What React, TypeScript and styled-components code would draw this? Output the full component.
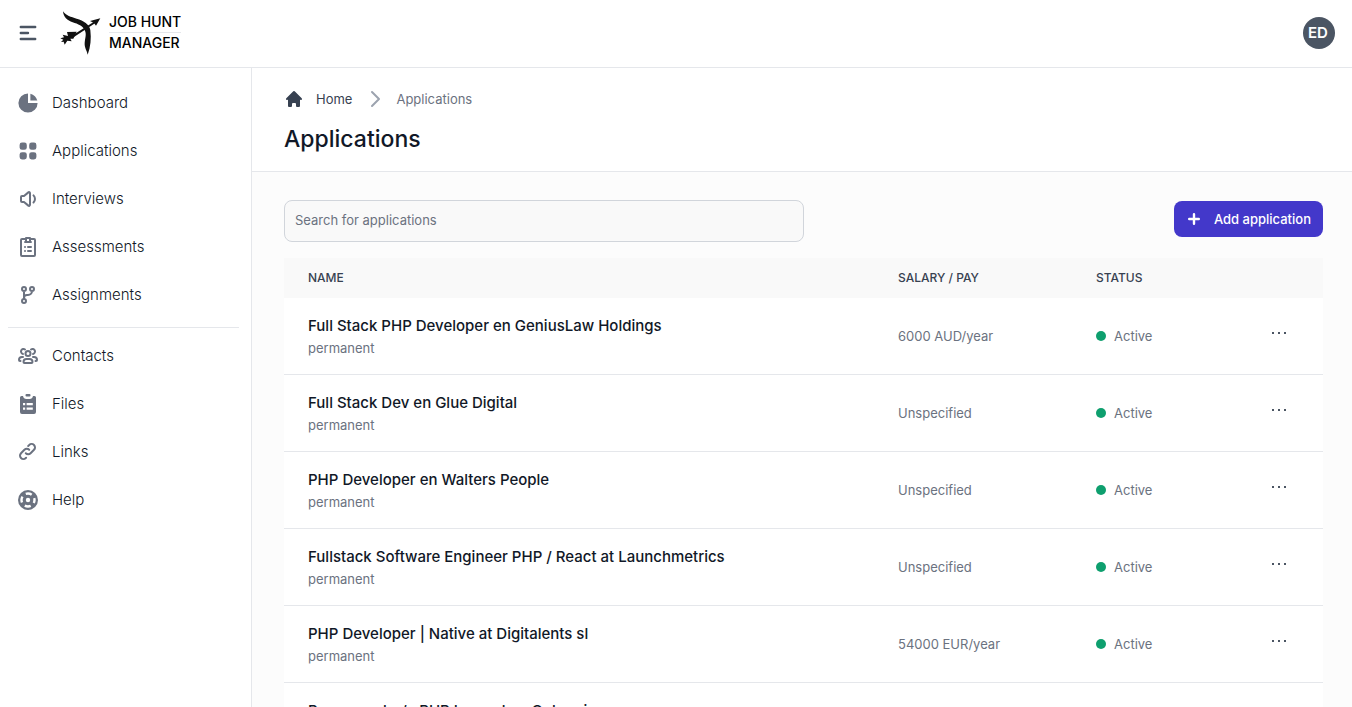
import React from 'react';
import styled, { createGlobalStyle } from 'styled-components';

const GlobalStyle = createGlobalStyle`
  *, *::before, *::after { box-sizing: border-box; }
  body { margin: 0; background: #fff; color: #111827; font: 400 15px/24px Inter, sans-serif; }
  button, input { font: inherit; }
  h1, p { margin: 0; }
  a { color: inherit; text-decoration: none; }
`;

const Shell = styled.div`
  display: flex;
  flex-direction: column;
  height: 100vh;
  overflow: hidden;
`;

const TopBar = styled.header`
  display: flex;
  flex: none;
  align-items: center;
  justify-content: space-between;
  padding: 8px 17px 9px 16px;
  border-bottom: 1px solid #e5e7eb;
`;

const Brand = styled.div`
  display: flex;
  align-items: center;
`;

const IconButton = styled.button`
  display: flex;
  padding: 0;
  border: 0;
  background: none;
  color: #4b5563;
  cursor: pointer;
`;

const LogoLink = styled.a`
  display: flex;
  align-items: center;
  gap: 3px;
  margin-left: 16px;
`;

const LogoText = styled.span`
  display: flex;
  flex-direction: column;
  padding-bottom: 2px;
  color: #000;
  font-size: 14px;
  font-weight: 500;
  line-height: 20px;
`;

const LogoLine = styled.span<{ $ruled?: boolean }>`
  border-bottom: ${(p) => (p.$ruled ? '1px solid #e5e7eb' : '0')};
`;

const Avatar = styled.button`
  width: 32px;
  height: 32px;
  padding: 0 2px 0 0;
  border: 0;
  border-radius: 50%;
  background: #4b5563;
  color: #fff;
  font-size: 15px;
  font-weight: 600;
  cursor: pointer;
`;

const Body = styled.div`
  display: flex;
  flex: 1;
  min-height: 0;
`;

const Sidebar = styled.nav`
  flex: none;
  width: 252px;
  padding: 15px 12px 16px 8px;
  border-right: 1px solid #e5e7eb;
`;

const NavList = styled.ul<{ $divided?: boolean }>`
  display: flex;
  flex-direction: column;
  gap: 8px;
  margin: ${(p) => (p.$divided ? '12px 0 0' : '0')};
  padding: ${(p) => (p.$divided ? '8px 0 0' : '0')};
  border-top: ${(p) => (p.$divided ? '1px solid #e5e7eb' : '0')};
  list-style: none;
`;

const NavLink = styled.a`
  display: flex;
  align-items: center;
  gap: 12px;
  padding: 8px;
  border-radius: 8px;
  font-weight: 300;

  svg { color: #6b7280; }
`;

const Main = styled.main`
  flex: 1;
  min-width: 0;
  overflow-y: auto;
  scrollbar-width: none;
  background: #fcfcfc;
`;

const PageHead = styled.div`
  padding: 19px 32px 16px;
  border-bottom: 1px solid #e5e7eb;
  background: #fff;
`;

const Crumbs = styled.nav`
  display: flex;
  align-items: center;
  gap: 10px;
  margin-bottom: 12px;
  color: #6b7280;
  font-size: 13px;
  line-height: 20px;
`;

const CrumbLink = styled.a`
  display: flex;
  align-items: center;
  gap: 12px;
  color: #374151;
`;

const Title = styled.h1`
  font-size: 23px;
  font-weight: 500;
  line-height: 32px;
`;

const Content = styled.div`
  padding: 28px 29px 0 32px;
`;

const Toolbar = styled.div`
  display: flex;
  align-items: center;
  justify-content: space-between;
  margin-bottom: 16px;
`;

const Search = styled.input`
  width: 50%;
  height: 42px;
  padding: 0 10px 2px;
  border: 1px solid #d1d5db;
  border-radius: 8px;
  background: #f9f9f9;
  color: #111827;
  font-size: 13px;

  &::placeholder { color: #6b7280; opacity: 1; }
`;

const AddButton = styled.button`
  display: flex;
  align-items: center;
  gap: 8px;
  height: 36px;
  margin-bottom: 4px;
  padding: 0 12px 0 8px;
  border: 0;
  border-radius: 8px;
  background: #4338ca;
  color: #fff;
  font-size: 13px;
  font-weight: 500;
  cursor: pointer;
`;

const Table = styled.table`
  width: 100%;
  border-collapse: separate;
  border-spacing: 0;
  table-layout: fixed;
`;

const HeadCell = styled.th<{ $width?: number }>`
  width: ${(p) => (p.$width ? `${p.$width}px` : 'auto')};
  height: 40px;
  padding: 0 24px;
  background: #f9f9f9;
  color: #374151;
  font-size: 12px;
  font-weight: 500;
  line-height: 16px;
  text-align: left;
  text-transform: uppercase;
`;

const Cell = styled.td`
  padding: 16px 24px;
  border-bottom: 1px solid #e5e7eb;
  background: #fff;
  color: #6b7280;
  font-size: 13px;
  line-height: 20px;
`;

const JobTitle = styled.p`
  color: #111827;
  font-size: 15px;
  font-weight: 500;
  line-height: 24px;
`;

const Status = styled.span`
  display: flex;
  align-items: center;
  gap: 8px;

  &::before {
    width: 10px;
    height: 10px;
    border-radius: 50%;
    background: #0e9f6e;
    content: '';
  }
`;

const Svg = ({ size = 24, box = 24, children }: { size?: number; box?: number; children: React.ReactNode }) => (
  <svg width={size} height={size} viewBox={`0 0 ${box} ${box}`} fill="currentColor" aria-hidden="true">
    {children}
  </svg>
);

const Line = ({ d, color = 'currentColor' }: { d: string; color?: string }) => (
  <Svg>
    <path d={d} fill="none" stroke={color} strokeWidth="2" strokeLinecap="round" strokeLinejoin="round" />
  </Svg>
);

const icons = {
  pie: (
    <Svg box={20}>
      <path d="M2 10a8 8 0 0 1 8-8v8h8a8 8 0 1 1-16 0z" />
      <path d="M12 2.252A8.014 8.014 0 0 1 17.748 8H12V2.252z" />
    </Svg>
  ),
  grid: (
    <Svg box={20}>
      <path d="M5 3a2 2 0 0 0-2 2v2a2 2 0 0 0 2 2h2a2 2 0 0 0 2-2V5a2 2 0 0 0-2-2H5zM5 11a2 2 0 0 0-2 2v2a2 2 0 0 0 2 2h2a2 2 0 0 0 2-2v-2a2 2 0 0 0-2-2H5zM11 5a2 2 0 0 1 2-2h2a2 2 0 0 1 2 2v2a2 2 0 0 1-2 2h-2a2 2 0 0 1-2-2V5zM11 13a2 2 0 0 1 2-2h2a2 2 0 0 1 2 2v2a2 2 0 0 1-2 2h-2a2 2 0 0 1-2-2v-2z" />
    </Svg>
  ),
  volume: (
    <Line d="M17.500 8.400a5 5 0 0 1 0 7.100M14 6.135v11.730a1 1 0 0 1-1.640.768L8 15H6a1 1 0 0 1-1-1v-4a1 1 0 0 1 1-1h2l4.360-3.633a1 1 0 0 1 1.640.768Z" />
  ),
  clipboard: (
    <Line d="M15 4h3a1 1 0 0 1 1 1v15a1 1 0 0 1-1 1H6a1 1 0 0 1-1-1V5a1 1 0 0 1 1-1h3m0 3h6m-3 5h3m-6 0h.01M12 16h3m-6 0h.01M10 3v4h4V3h-4Z" />
  ),
  branch: (
    <Line d="M8 8v8m0-8a2 2 0 1 0 0-4 2 2 0 0 0 0 4Zm0 8a2 2 0 1 0 0 4 2 2 0 0 0 0-4Zm8-8a2 2 0 1 0 0-4 2 2 0 0 0 0 4Zm0 0a4 4 0 0 1-4 4h-1a3 3 0 0 0-3 3" />
  ),
  users: (
    <Line d="M4.5 17H4a1 1 0 0 1-1-1 3 3 0 0 1 3-3h1m0-3.05A2.5 2.5 0 1 1 9 5.5M19.5 17h.5a1 1 0 0 0 1-1 3 3 0 0 0-3-3h-1m0-3.05a2.5 2.5 0 1 0-2-4.45m.5 13.5h-7a1 1 0 0 1-1-1 3 3 0 0 1 3-3h3a3 3 0 0 1 3 3 1 1 0 0 1-1 1Zm-1-9.5a2.5 2.5 0 1 1-5 0 2.5 2.5 0 0 1 5 0Z" />
  ),
  files: (
    <Svg>
      <rect x="9.500" y="2" width="5" height="2.400" rx="1" />
      <path
        fillRule="evenodd"
        d="M5.500 4h1.500c.3 2 1.700 3 3.300 3h3.400c1.600 0 3-1 3.300-3h1.500A1.500 1.500 0 0 1 20 5.500V20a2 2 0 0 1-2 2H6a2 2 0 0 1-2-2V5.500A1.500 1.500 0 0 1 5.500 4ZM7 11v2.300h2.200V11Zm3.600 0v2.300h6.200V11ZM7 15.500v2.300h2.200v-2.300Zm3.600 0v2.300h6.200v-2.300Z"
      />
    </Svg>
  ),
  link: (
    <Line d="M13.213 9.787a3.391 3.391 0 0 0-4.795 0l-3.425 3.426a3.390 3.390 0 0 0 4.795 4.794l.321-.304m-.321-4.490a3.390 3.390 0 0 0 4.795 0l3.424-3.426a3.390 3.390 0 0 0-4.794-4.795l-1.028.961" />
  ),
  help: (
    <Svg>
      <circle cx="12" cy="12" r="10" />
      <circle cx="12" cy="12" r="6.500" fill="none" stroke="#fff" strokeWidth="2.400" strokeDasharray="6.200 4.010" strokeDashoffset="3.100" />
      <circle cx="12" cy="12" r="2.200" fill="#fff" />
    </Svg>
  ),
};

type IconName = keyof typeof icons;

const primaryNav: [string, IconName][] = [
  ['Dashboard', 'pie'],
  ['Applications', 'grid'],
  ['Interviews', 'volume'],
  ['Assessments', 'clipboard'],
  ['Assignments', 'branch'],
];

const secondaryNav: [string, IconName][] = [
  ['Contacts', 'users'],
  ['Files', 'files'],
  ['Links', 'link'],
  ['Help', 'help'],
];

const jobs = [
  { title: 'Full Stack PHP Developer en GeniusLaw Holdings', pay: '6000 AUD/year' },
  { title: 'Full Stack Dev en Glue Digital', pay: 'Unspecified' },
  { title: 'PHP Developer en Walters People', pay: 'Unspecified' },
  { title: 'Fullstack Software Engineer PHP / React at Launchmetrics', pay: 'Unspecified' },
  { title: 'PHP Developer | Native at Digitalents sl', pay: '54000 EUR/year' },
  { title: 'Programador/a PHP Laravel en Octopai', pay: 'Unspecified' },
];

const NavItems = ({ items, divided }: { items: [string, IconName][]; divided?: boolean }) => (
  <NavList $divided={divided}>
    {items.map(([label, icon]) => (
      <li key={label}>
        <NavLink href="#">
          {icons[icon]}
          {label}
        </NavLink>
      </li>
    ))}
  </NavList>
);

const BowLogo = () => (
  <svg width="50" height="50" viewBox="0 0 150 150" fill="#111" aria-hidden="true">
    <path d="M21 10C30 23 45 27 62 32C83 38 100 48 103 66C106 92 104 116 95 140C93 128 85 120 86 105C87 90 92 80 87 68C81 54 66 48 50 43C34 37 22 27 21 10Z" />
    <path d="M45 85L114 41L117 46L48 91Z" />
    <path d="M133 31L120 53L114 45L102 39Z" />
    <path d="M13 91L24 88L20 80L36 84L33 72L62 71L52 92L43 92L47 100L34 98L26 110L23 101L15 102L22 95Z" />
  </svg>
);

export default function App() {
  return (
    <Shell>
      <GlobalStyle />
      <TopBar>
        <Brand>
          <IconButton aria-label="Toggle sidebar">
            <Svg box={20}>
              <path d="M3 5a1 1 0 0 1 1-1h12a1 1 0 1 1 0 2H4a1 1 0 0 1-1-1zM3 10a1 1 0 0 1 1-1h6a1 1 0 1 1 0 2H4a1 1 0 0 1-1-1zM3 15a1 1 0 0 1 1-1h12a1 1 0 1 1 0 2H4a1 1 0 0 1-1-1z" />
            </Svg>
          </IconButton>
          <LogoLink href="#">
            <BowLogo />
            <LogoText>
              <LogoLine $ruled>JOB HUNT</LogoLine>
              <LogoLine>MANAGER</LogoLine>
            </LogoText>
          </LogoLink>
        </Brand>
        <Avatar aria-label="Account menu">ED</Avatar>
      </TopBar>
      <Body>
        <Sidebar aria-label="Main">
          <NavItems items={primaryNav} />
          <NavItems items={secondaryNav} divided />
        </Sidebar>
        <Main>
          <PageHead>
            <Crumbs aria-label="Breadcrumb">
              <CrumbLink href="#">
                <Svg size={20} box={20}>
                  <path d="M10.707 2.293a1 1 0 0 0-1.414 0l-7 7a1 1 0 0 0 1.414 1.414L4 10.414V17a1 1 0 0 0 1 1h2a1 1 0 0 0 1-1v-2a1 1 0 0 1 1-1h2a1 1 0 0 1 1 1v2a1 1 0 0 0 1 1h2a1 1 0 0 0 1-1v-6.586l.293.293a1 1 0 0 0 1.414-1.414l-7-7z" />
                </Svg>
                Home
              </CrumbLink>
              <Line d="M10 5l7 7-7 7" color="#9ca3af" />
              <span aria-current="page">Applications</span>
            </Crumbs>
            <Title>Applications</Title>
          </PageHead>
          <Content>
            <Toolbar>
              <Search type="search" aria-label="Search for applications" placeholder="Search for applications" />
              <AddButton>
                <Svg box={20}>
                  <path d="M10 5a1 1 0 0 1 1 1v3h3a1 1 0 1 1 0 2h-3v3a1 1 0 1 1-2 0v-3H6a1 1 0 1 1 0-2h3V6a1 1 0 0 1 1-1z" />
                </Svg>
                Add application
              </AddButton>
            </Toolbar>
            <Table>
              <thead>
                <tr>
                  <HeadCell scope="col">Name</HeadCell>
                  <HeadCell scope="col" $width={198}>Salary / Pay</HeadCell>
                  <HeadCell scope="col" $width={175}>Status</HeadCell>
                  <HeadCell scope="col" $width={76} aria-label="Actions" />
                </tr>
              </thead>
              <tbody>
                {jobs.map((job) => (
                  <tr key={job.title}>
                    <Cell>
                      <JobTitle>{job.title}</JobTitle>
                      <p>permanent</p>
                    </Cell>
                    <Cell>{job.pay}</Cell>
                    <Cell>
                      <Status>Active</Status>
                    </Cell>
                    <Cell>
                      <IconButton aria-label={`Actions for ${job.title}`}>
                        <svg width="16" height="24" viewBox="0 0 16 24" fill="currentColor" aria-hidden="true">
                          <path d="M1 8h2v2H1zM7 8h2v2H7zM13 8h2v2h-2z" />
                        </svg>
                      </IconButton>
                    </Cell>
                  </tr>
                ))}
              </tbody>
            </Table>
          </Content>
        </Main>
      </Body>
    </Shell>
  );
}
